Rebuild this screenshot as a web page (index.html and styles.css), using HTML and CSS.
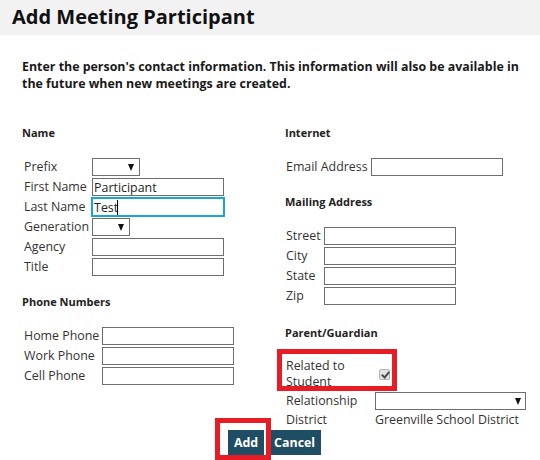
FILE: index.html
```html
<!DOCTYPE html>
<html>
<head>
<meta charset="utf-8">
<title>Add Meeting Participant</title>
<link rel="stylesheet" href="styles.css">
</head>
<body>
<div class="header"><h1 class="title">Add Meeting Participant</h1></div>
<div class="content">
  <p class="intro">Enter the person's contact information. This information will also be available in the future when new meetings are created.</p>
  <div class="columns">
    <div class="col">
      <div class="section">
        <h2 class="heading">Name</h2>
        <table class="form">
          <tr><td class="lbl">Prefix</td><td><span class="select sel-prefix"><select></select></span></td></tr>
          <tr><td class="lbl">First Name</td><td><input class="text" type="text" value="Participant"></td></tr>
          <tr><td class="lbl">Last Name</td><td><span class="caret-wrap"><input class="text focused" type="text" value="Test"><span class="caret"></span></span></td></tr>
          <tr><td class="lbl">Generation</td><td><span class="select sel-gen"><select></select></span></td></tr>
          <tr><td class="lbl">Agency</td><td><input class="text" type="text"></td></tr>
          <tr><td class="lbl">Title</td><td><input class="text" type="text"></td></tr>
        </table>
      </div>
      <div class="section">
        <h2 class="heading">Phone Numbers</h2>
        <table class="form">
          <tr><td class="lbl">Home Phone</td><td><input class="text" type="text"></td></tr>
          <tr><td class="lbl">Work Phone</td><td><input class="text" type="text"></td></tr>
          <tr><td class="lbl">Cell Phone</td><td><input class="text" type="text"></td></tr>
        </table>
      </div>
    </div>
    <div class="col">
      <div class="section">
        <h2 class="heading">Internet</h2>
        <table class="form">
          <tr><td class="lbl">Email Address</td><td><input class="text" type="text"></td></tr>
        </table>
      </div>
      <div class="section">
        <h2 class="heading">Mailing Address</h2>
        <table class="form">
          <tr><td class="lbl">Street</td><td><input class="text" type="text"></td></tr>
          <tr><td class="lbl">City</td><td><input class="text" type="text"></td></tr>
          <tr><td class="lbl">State</td><td><input class="text" type="text"></td></tr>
          <tr><td class="lbl">Zip</td><td><input class="text" type="text"></td></tr>
        </table>
      </div>
      <div class="section section-parent">
        <h2 class="heading">Parent/Guardian</h2>
        <table class="form parent">
          <tr><td class="lbl wide">Related to Student</td><td><input class="check" type="checkbox" checked></td></tr>
          <tr><td class="lbl">Relationship</td><td><span class="select sel-rel"><select></select></span></td></tr>
          <tr><td class="lbl">District</td><td class="value">Greenville School District</td></tr>
        </table>
      </div>
    </div>
  </div>
  <div class="actions">
    <button class="btn" type="button">Add</button>
    <button class="btn" type="button">Cancel</button>
  </div>
</div>
<div class="highlight hl-related"></div>
<div class="highlight hl-add"></div>
</body>
</html>
```
FILE: styles.css
```css
html, body {
  margin: 0;
  padding: 0;
}
body {
  position: relative;
  width: 540px;
  height: 460px;
  overflow: hidden;
  background: #ffffff;
  font-family: "Open Sans", "Noto Sans", sans-serif;
  color: #333333;
}
.header {
  background: #f2f2f2;
  height: 35px;
  padding-left: 12px;
}
.title {
  margin: 0;
  font-size: 20px;
  line-height: 33px;
  font-weight: 700;
  color: #111111;
}
.content {
  padding-left: 22px;
}
.intro {
  margin: 23px 0 0 0;
  width: 505px;
  font-size: 12.4px;
  line-height: 17px;
  font-weight: 700;
  color: #1a1a1a;
}
.columns {
  margin-top: 33px;
  display: grid;
  grid-template-columns: 262px 1fr;
}
.section + .section {
  margin-top: 17px;
}
.section + .section-parent {
  margin-top: 19px;
}
.heading {
  margin: 0 0 16px 0;
  font-size: 11px;
  line-height: 16px;
  font-weight: 700;
  color: #222222;
}
.col + .col .heading {
  padding-left: 1px;
}
.form {
  border-collapse: collapse;
}
.form td {
  padding: 1px 2px;
  font-size: 12.4px;
  line-height: 18px;
  vertical-align: middle;
}
.form td.lbl {
  padding-right: 1px;
}
.lbl {
  color: #333333;
  white-space: nowrap;
}
.lbl.wide {
  white-space: normal;
  width: 86px;
  line-height: 16px;
}
.parent td {
  line-height: 16px;
}
.value {
  color: #333333;
}
.text {
  display: block;
  box-sizing: border-box;
  width: 132px;
  height: 18px;
  margin: 0;
  padding: 0 1px;
  border: 1px solid #6e6e6e;
  border-radius: 0;
  font-family: "Open Sans", "Noto Sans", sans-serif;
  font-size: 12.4px;
  color: #222222;
  background: #ffffff;
  outline: none;
}
.text.focused {
  border-color: #1aa5d8;
  box-shadow: 0 0 0 1px #1aa5d8;
}
.caret-wrap {
  position: relative;
  display: block;
}
.caret {
  position: absolute;
  left: 25px;
  top: 2px;
  width: 1px;
  height: 15px;
  background: #000000;
}
.select {
  position: relative;
  display: block;
}
.select select {
  display: block;
  box-sizing: border-box;
  height: 18px;
  margin: 0;
  padding: 0;
  border: 1px solid #6e6e6e;
  border-radius: 0;
  background: #ffffff;
  -webkit-appearance: none;
  appearance: none;
}
.select::after {
  content: "";
  position: absolute;
  top: 6px;
  width: 0;
  height: 0;
  border-left: 3.5px solid transparent;
  border-right: 3.5px solid transparent;
  border-top: 7px solid #111111;
}
.sel-prefix select { width: 48px; }
.sel-prefix::after { left: 36px; }
.sel-gen select { width: 38px; }
.sel-gen::after { left: 26px; }
.sel-rel select { width: 151px; }
.sel-rel::after { left: 140px; }
.check {
  -webkit-appearance: none;
  appearance: none;
  position: relative;
  display: block;
  box-sizing: border-box;
  width: 11px;
  height: 11px;
  margin: 0 0 0 4px;
  border: 1px solid #b5b5b5;
  border-radius: 2px;
  background: #e4e4e4;
}
.check::after {
  content: "";
  position: absolute;
  left: 3px;
  top: 0px;
  width: 3px;
  height: 6px;
  border-right: 2px solid #4a4a4a;
  border-bottom: 2px solid #4a4a4a;
  transform: rotate(40deg);
}
.actions {
  margin-top: 1px;
  margin-left: -22px;
  padding-left: 9px;
  display: flex;
  justify-content: center;
  gap: 4px;
}
.btn {
  height: 25px;
  margin: 0;
  padding: 0 6px;
  border: none;
  border-radius: 0;
  background: #1e4d64;
  color: #ffffff;
  font-family: "Open Sans", "Noto Sans", sans-serif;
  font-size: 12.4px;
  font-weight: 700;
}
.highlight {
  position: absolute;
  box-sizing: border-box;
  border: 5px solid #e81c24;
}
.hl-related {
  left: 277px;
  top: 349px;
  width: 120px;
  height: 42px;
}
.hl-add {
  left: 215px;
  top: 418px;
  width: 56px;
  height: 42px;
}
```
